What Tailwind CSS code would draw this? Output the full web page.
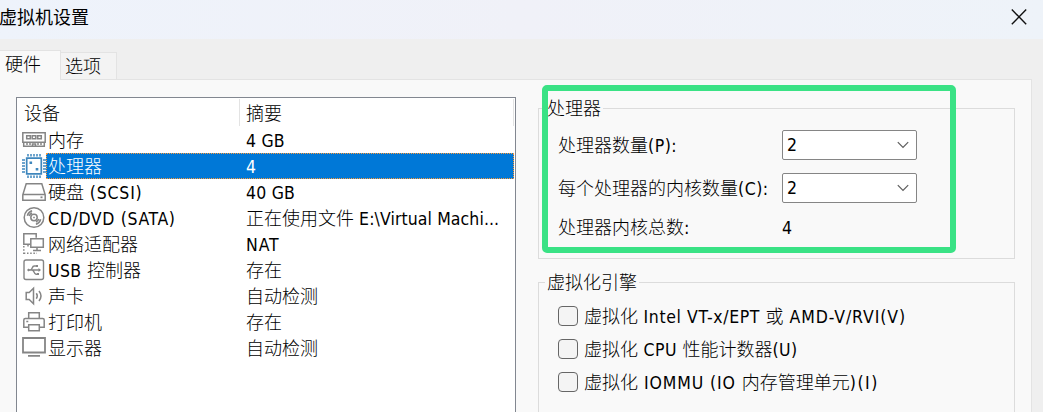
<!DOCTYPE html>
<html lang="zh-CN">
<head>
<meta charset="utf-8">
<title>虚拟机设置</title>
<script src="https://cdn.jsdelivr.net/npm/@tailwindcss/browser@4"></script>
</head>
<body class="w-[1043px] h-[412px] overflow-hidden bg-[#efefef] flex flex-col text-black text-[18px] leading-[26px] font-light whitespace-nowrap font-['DejaVu_Sans_Condensed','Noto_Sans_CJK_SC',sans-serif]">
<header class="h-[39px] shrink-0 flex justify-between bg-linear-to-r from-[#eef3fb] via-[#f0f1f8] to-[#eef3f9]">
  <h1 class="text-[18px] leading-[35px] font-normal -ml-px">虚拟机设置</h1>
  <svg class="mt-[9px] mr-4 size-4 shrink-0" viewBox="0 0 16 16" fill="none" stroke="#111" stroke-width="1.4"><path d="M.8.6l14.4 14.6M15.2.6L.8 15.2"/></svg>
</header>
<nav class="h-[41px] shrink-0 flex items-end relative z-10">
  <div class="w-[61px] h-[30px] bg-[#f9f9f9] border-t border-r border-[#e3e3e3] pl-[5px] leading-[28px]">硬件</div>
  <div class="w-[56px] h-[28px] bg-[#f3f3f3] border-t border-r border-b border-[#e3e3e3] pl-[4px] leading-[27px]">选项</div>
  <div class="w-[915px] h-px bg-[#e3e3e3]"></div>
</nav>
<main class="h-[332px] w-[1032px] bg-[#f9f9f9] border-r border-[#e3e3e3] flex pl-4 pt-[17px]">
  <section class="w-[500px] h-[315px] shrink-0 bg-white border border-b-0 border-[#828790] leading-[28px]">
    <div class="flex h-[29px] pt-px">
      <div class="w-[223px] h-[27px] border-r border-[#e3e3e3] pl-[7px] leading-[30px]">设备</div>
      <div class="w-[274px] h-[27px] border-r border-[#e3e3e3] pl-[6px] leading-[30px]">摘要</div>
    </div>
    <div class="h-[26px] flex">
      <svg class="ml-[5px] mr-[2px] w-6 h-[26px] shrink-0" viewBox="0 0 24 26" fill="none" stroke="#858585" stroke-width="1.5"><path d="M.8 5.7h22.4v9.6H.8zM1.7 16v3.2h20.6V16M4.7 8.7h3.6v3H4.7zM10.2 8.7h3.6v3h-3.6zM15.7 8.7h3.6v3h-3.6zM5 18v-2M8 18v-2M16 18v-2M19 18v-2M10.5 18.5v-1.6h3v1.6"/></svg>
      <div class="w-[198px]">内存</div><div><span class="text-[17.5px] tracking-[0.2px]">4 GB</span></div>
    </div>
    <div class="h-[26px] flex">
      <svg class="ml-[5px] w-6 h-[26px] shrink-0" viewBox="0 0 24 26" fill="none" stroke="#3f87bd" stroke-width="1.5"><path d="M4.7 5.2h14.6v15.6H4.7z" stroke-width="1.7"/><path d="M6 1v2.5M9 1v2.5M12 1v2.5M15 1v2.5M18 1v2.5M6 22.5V25M9 22.5V25M12 22.5V25M15 22.5V25M18 22.5V25M0 7h3M0 10h3M0 13h3M0 16h3M0 19h3M21 7h3M21 10h3M21 13h3M21 16h3M21 19h3"/><path d="M7.5 8.5h2.6v2.6H7.5zM13.7 15h2.6v2.6h-2.6z" fill="#3f87bd" stroke="none"/></svg>
      <div class="w-[468px] h-[26px] flex bg-[#0078d7] border border-dotted border-[#ff9a38] text-white pl-px leading-[26px]"><div class="w-[198px]">处理器</div><div><span class="text-[17.5px]">4</span></div></div>
    </div>
    <div class="h-[26px] flex">
      <svg class="ml-[5px] mr-[2px] w-6 h-[26px] shrink-0" viewBox="0 0 24 26" fill="none" stroke="#858585" stroke-width="1.5"><path d="M4.2 4.7h15.6l3.4 11.2v5.4H.8v-5.4zM.8 15.5h22.4"/><path d="M18.5 18.3h2" stroke-width="1.8"/></svg>
      <div class="w-[198px]">硬盘<span class="text-[17.5px] tracking-[0.8px]"> (SCSI)</span></div><div><span class="text-[17.5px] tracking-[0.2px]">40 GB</span></div>
    </div>
    <div class="h-[26px] flex">
      <svg class="ml-[5px] mr-[2px] w-6 h-[26px] shrink-0" viewBox="0 0 24 26" fill="none" stroke="#858585" stroke-width="1.5"><circle cx="12" cy="12.5" r="9.8"/><circle cx="12" cy="12.5" r="3.2"/><path d="M11.2 12.5h1.6M5.3 10.8q1-3.8 4.8-5M7.2 11q.8-2.2 2.8-3M18.7 14.2q-1 3.8-4.8 5M16.8 14q-.8 2.2-2.8 3"/></svg>
      <div class="w-[198px]"><span class="text-[17.5px] tracking-[0.65px]">CD/DVD (SATA)</span></div><div>正在使用文件<span class="text-[17.5px] tracking-[0.1px]"> E:\Virtual Machi...</span></div>
    </div>
    <div class="h-[26px] flex">
      <svg class="ml-[5px] mr-[2px] w-6 h-[26px] shrink-0" viewBox="0 0 24 26" fill="none" stroke="#858585" stroke-width="1.5"><path d="M8 13.3H1.8V2.7h12.4v4M8.8 7.7h12.5v8.6H8.8zM15 16.3v3M11 19.5h8M6 13.3v2.2"/><path d="M1.8 15v8M1.8 22.3H15" stroke-dasharray="1.5 1.7"/></svg>
      <div class="w-[198px]">网络适配器</div><div><span class="text-[17.5px] tracking-[0.9px]">NAT</span></div>
    </div>
    <div class="h-[26px] flex">
      <svg class="ml-[5px] mr-[2px] w-6 h-[26px] shrink-0" viewBox="0 0 24 26" fill="none" stroke="#858585" stroke-width="1.4"><rect x="2" y="3" width="19.5" height="19.5" rx="2"/><path d="M6 13h12M8 13q1.5 0 2.2-2t2-2H14M10 13q1.3 0 2 2t2 2.2h2"/><path d="M5 13l1.5-1.5L8 13l-1.5 1.5zM16.5 11l2.5 2-2.5 2zM14 8h2v2h-2zM15 16h2v2h-2z" fill="#858585" stroke="none"/></svg>
      <div class="w-[198px]"><span class="text-[17.5px] tracking-[0.4px]">USB </span>控制器</div><div>存在</div>
    </div>
    <div class="h-[26px] flex">
      <svg class="ml-[5px] mr-[2px] w-6 h-[26px] shrink-0" viewBox="0 0 24 26" fill="none" stroke="#858585" stroke-width="1.5"><path d="M4.2 9.5h3L11.5 5.3v15.4l-4.3-4.2h-3zM14.3 10.3q2 2.7 0 5.4M17 8q4 5 0 10"/></svg>
      <div class="w-[198px]">声卡</div><div>自动检测</div>
    </div>
    <div class="h-[26px] flex">
      <svg class="ml-[5px] mr-[2px] w-6 h-[26px] shrink-0" viewBox="0 0 24 26" fill="none" stroke="#858585" stroke-width="1.5"><path d="M6.7 9V3.7h10.6V9M6.5 18.2H1.8V11q0-1.5 1.5-1.5h17.4q1.5 0 1.5 1.5v7.2h-4.7M6.7 15.7h10.6v6.1H6.7zM4.3 12.5h2"/></svg>
      <div class="w-[198px]">打印机</div><div>存在</div>
    </div>
    <div class="h-[26px] flex">
      <svg class="ml-[5px] mr-[2px] w-6 h-[26px] shrink-0" viewBox="0 0 24 26" fill="none" stroke="#858585" stroke-width="1.8"><path d="M1 3h22v14.5H1zM6 20.8h12"/></svg>
      <div class="w-[198px]">显示器</div><div>自动检测</div>
    </div>
  </section>
  <section class="ml-[22px] w-[477px] pt-[11px]">
    <div class="relative h-[151px] border border-[#dcdcdc]">
      <div class="-mt-[14px] ml-[6px] w-[58px] h-[26px] bg-[#f9f9f9] px-[2px] leading-[28px]">处理器</div>
      <div class="mt-[8px] ml-[19px] h-[32px] flex items-center">
        <div class="w-[224px] pt-[2px]">处理器数量<span class="text-[17.5px] tracking-[0.5px]">(P):</span></div>
        <div class="w-[135px] h-[30px] bg-white border border-[#858585] rounded-[2px] flex items-center justify-between pl-1 pr-[7px]"><span class="text-[17.5px]">2</span><svg class="w-3 h-2" viewBox="0 0 12 8" fill="none" stroke="#5c5c5c" stroke-width="1.2"><path d="M.8 1.2L6 6.4l5.2-5.2"/></svg></div>
      </div>
      <div class="mt-[11px] ml-[19px] h-[32px] flex items-center">
        <div class="w-[224px] pt-[2px]">每个处理器的内核数量<span class="text-[17.5px] tracking-[0.5px]">(C):</span></div>
        <div class="w-[135px] h-[30px] bg-white border border-[#858585] rounded-[2px] flex items-center justify-between pl-1 pr-[7px]"><span class="text-[17.5px]">2</span><svg class="w-3 h-2" viewBox="0 0 12 8" fill="none" stroke="#5c5c5c" stroke-width="1.2"><path d="M.8 1.2L6 6.4l5.2-5.2"/></svg></div>
      </div>
      <div class="mt-[11px] ml-[19px] flex"><div class="w-[224px]">处理器内核总数:</div><div><span class="text-[17.5px]">4</span></div></div>
      <div class="absolute left-[2.5px] -top-[24px] w-[414px] h-[168px] border-6 border-[#3ae285] rounded-[5px]"></div>
    </div>
    <div class="mt-[23px] h-[130px] border border-b-0 border-[#dcdcdc]">
      <div class="-mt-[14px] ml-[6px] w-[94px] h-[26px] bg-[#f9f9f9] px-[2px] leading-[28px]">虚拟化引擎</div>
      <div class="ml-[19px] mt-[4px] h-[33px] flex items-center gap-[6px]"><div class="size-5 shrink-0 border border-[#666] rounded-[4px] bg-[#f4f4f4]"></div><div class="pt-[2px]">虚拟化<span class="text-[17.5px] tracking-[0.6px]"> Intel VT-x/EPT </span>或<span class="text-[17.5px] tracking-[0.9px]"> AMD-V/RVI(V)</span></div></div>
      <div class="ml-[19px] h-[33px] flex items-center gap-[6px]"><div class="size-5 shrink-0 border border-[#666] rounded-[4px] bg-[#f4f4f4]"></div><div class="pt-[2px]">虚拟化<span class="text-[17.5px] tracking-[0.5px]"> CPU </span>性能计数器<span class="text-[17.5px] tracking-[0.4px]">(U)</span></div></div>
      <div class="ml-[19px] h-[33px] flex items-center gap-[6px]"><div class="size-5 shrink-0 border border-[#666] rounded-[4px] bg-[#f4f4f4]"></div><div class="pt-[2px]">虚拟化<span class="text-[17.5px] tracking-[0.9px]"> IOMMU (IO </span>内存管理单元<span class="text-[17.5px] tracking-[1.5px]">)(I)</span></div></div>
    </div>
  </section>
</main>
</body>
</html>
